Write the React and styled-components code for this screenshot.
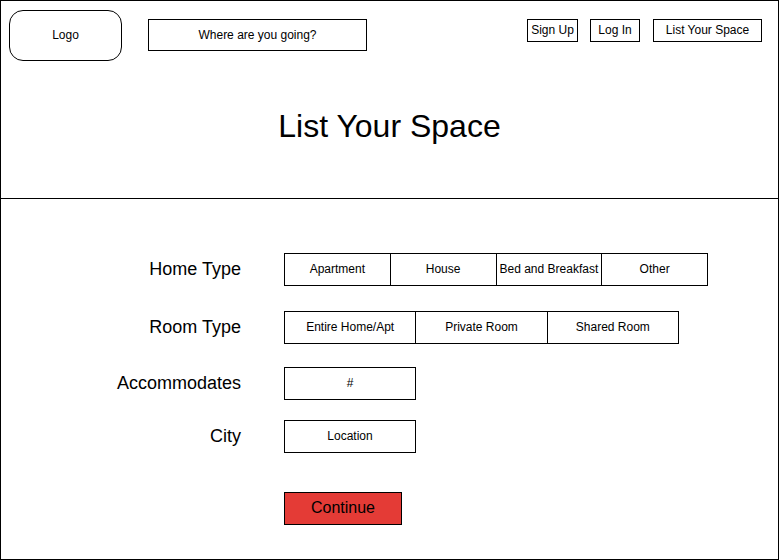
import React from "react";
import styled, { createGlobalStyle } from "styled-components";

const Global = createGlobalStyle`
  body {
    margin: 0;
    font-family: "Liberation Sans", Arial, sans-serif;
    color: #000;
  }
  * { box-sizing: border-box; }
`;

const Page = styled.div`
  width: 779px;
  height: 560px;
  border: 1px solid #000;
  background: #fff;
  display: flex;
  flex-direction: column;
`;

const Header = styled.header`
  height: 198px;
  border-bottom: 1px solid #000;
  display: flex;
  flex-direction: column;
`;

const Nav = styled.nav`
  display: flex;
  align-items: flex-start;
  padding: 9px 16px 0 8px;
`;

const Logo = styled.div`
  width: 113px;
  height: 51px;
  border: 1px solid #000;
  border-radius: 14px;
  display: flex;
  align-items: center;
  justify-content: center;
  padding-bottom: 2px;
  font-size: 12px;
`;

const Search = styled.div`
  width: 219px;
  height: 32px;
  margin: 9px 0 0 26px;
  border: 1px solid #000;
  display: flex;
  align-items: center;
  justify-content: center;
  padding-bottom: 1px;
  font-size: 12px;
`;

const Links = styled.div`
  margin: 9px 0 0 auto;
  display: flex;
`;

const NavButton = styled.div`
  width: ${(p) => p.$w}px;
  height: 23px;
  margin-left: ${(p) => p.$gap || 0}px;
  border: 1px solid #000;
  display: flex;
  align-items: center;
  justify-content: center;
  padding-bottom: 2px;
  font-size: 12px;
`;

const Title = styled.h1`
  margin: 47px 0 0;
  font-size: 32px;
  font-weight: 400;
  text-align: center;
`;

const Form = styled.section`
  padding-top: 54px;
  display: flex;
  flex-direction: column;
`;

const Row = styled.div`
  display: flex;
  align-items: center;
  margin-top: ${(p) => p.$top || 0}px;
`;

const Label = styled.div`
  width: 240px;
  margin-right: 43px;
  text-align: right;
  font-size: 18px;
`;

const Segments = styled.div`
  width: ${(p) => p.$w}px;
  height: 33px;
  border: 1px solid #000;
  display: flex;
`;

const Segment = styled.div`
  flex: 1;
  display: flex;
  align-items: center;
  justify-content: center;
  padding-bottom: 2px;
  font-size: 12px;
  white-space: nowrap;
  & + & {
    border-left: 1px solid #000;
  }
`;

const Continue = styled.button`
  width: 118px;
  height: 33px;
  margin-left: 283px;
  border: 1px solid #000;
  background: #e43b36;
  color: #000;
  font-family: inherit;
  font-size: 16px;
  padding: 0 0 1px;
`;

const homeTypes = ["Apartment", "House", "Bed and Breakfast", "Other"];
const roomTypes = ["Entire Home/Apt", "Private Room", "Shared Room"];

export default function App() {
  return (
    <>
      <Global />
      <Page>
        <Header>
          <Nav>
            <Logo>Logo</Logo>
            <Search>Where are you going?</Search>
            <Links>
              <NavButton $w={51}>Sign Up</NavButton>
              <NavButton $w={50} $gap={12}>Log In</NavButton>
              <NavButton $w={109} $gap={13}>List Your Space</NavButton>
            </Links>
          </Nav>
          <Title>List Your Space</Title>
        </Header>
        <Form>
          <Row>
            <Label>Home Type</Label>
            <Segments $w={424}>
              {homeTypes.map((t) => (
                <Segment key={t}>{t}</Segment>
              ))}
            </Segments>
          </Row>
          <Row $top={25}>
            <Label>Room Type</Label>
            <Segments $w={395}>
              {roomTypes.map((t) => (
                <Segment key={t}>{t}</Segment>
              ))}
            </Segments>
          </Row>
          <Row $top={23}>
            <Label>Accommodates</Label>
            <Segments $w={132}>
              <Segment>#</Segment>
            </Segments>
          </Row>
          <Row $top={20}>
            <Label>City</Label>
            <Segments $w={132}>
              <Segment>Location</Segment>
            </Segments>
          </Row>
          <Row $top={39}>
            <Continue>Continue</Continue>
          </Row>
        </Form>
      </Page>
    </>
  );
}
